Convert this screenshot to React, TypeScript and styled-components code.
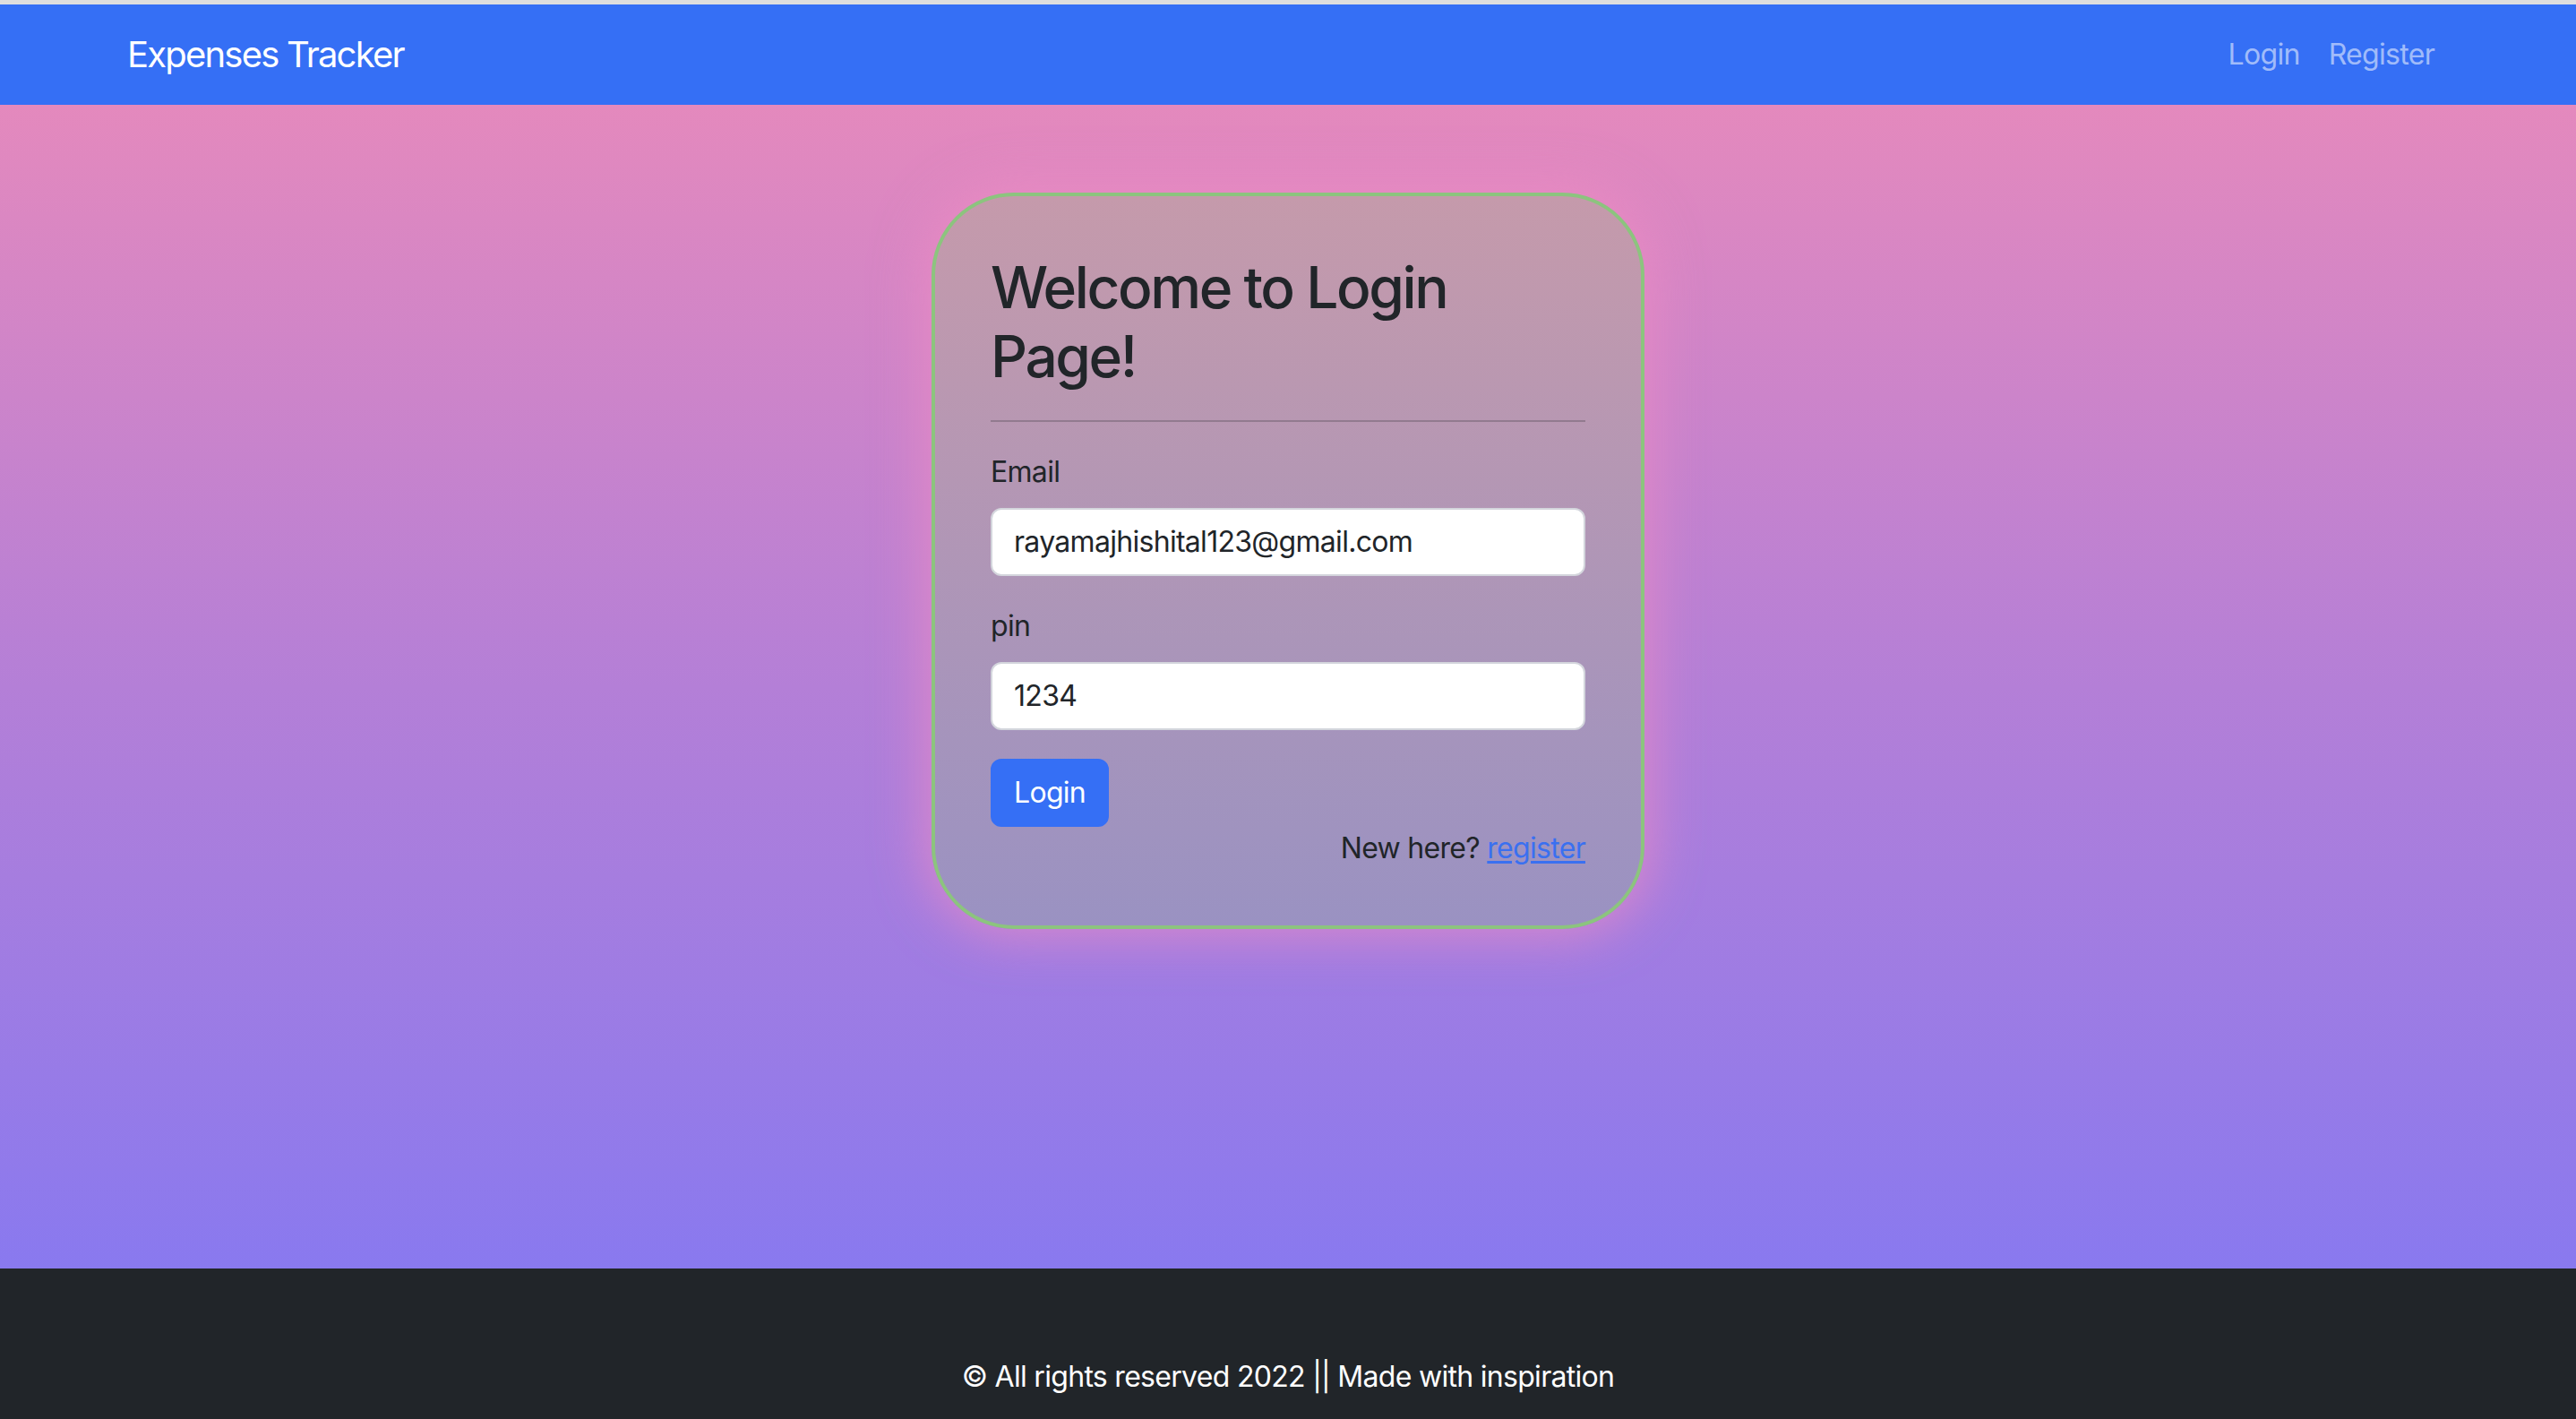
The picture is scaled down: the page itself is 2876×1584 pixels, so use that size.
import React from "react";
import styled, { createGlobalStyle } from "styled-components";

const GlobalStyle = createGlobalStyle`
  html, body {
    margin: 0;
    padding: 0;
  }
  body {
    font-family: Inter, "Noto Sans", "Liberation Sans", sans-serif;
    color: #212529;
    background: #212529;
  }
  * { box-sizing: border-box; }
`;

const Page = styled.div`
  min-height: 100vh;
  display: flex;
  flex-direction: column;
  border-top: 5px solid #dedede;
`;

const Navbar = styled.nav`
  height: 112px;
  background: #356ff5;
  flex-shrink: 0;
`;

const NavContainer = styled.div`
  max-width: 2640px;
  height: 100%;
  margin: 0 auto;
  padding: 0 24px;
  display: flex;
  align-items: center;
  justify-content: space-between;
`;

const Brand = styled.a`
  font-size: 40px;
  line-height: 60px;
  letter-spacing: -1.8px;
  color: #ffffff;
  text-decoration: none;
  font-weight: 400;
`;

const NavLinks = styled.div`
  display: flex;
  align-items: center;
`;

const NavLink = styled.a`
  font-size: 32px;
  line-height: 48px;
  letter-spacing: -0.7px;
  padding: 0 16px;
  color: rgba(255, 255, 255, 0.55);
  text-decoration: none;
`;

const Main = styled.main`
  flex: 1;
  display: flex;
  flex-direction: column;
  align-items: center;
  background: linear-gradient(180deg, #e489bd 0%, #b47fd7 50%, #8979ef 100%);
`;

const Card = styled.section`
  width: 796px;
  margin-top: 98px;
  padding: 64px 62px 62px;
  border: 4px solid #8cc47e;
  border-radius: 92px;
  background: linear-gradient(180deg, #c59aab 0%, #9a92c2 100%);
  box-shadow: 0 0 56px 8px rgba(240, 140, 195, 0.7);
`;

const Title = styled.h2`
  margin: 0;
  font-size: 64px;
  line-height: 1.2;
  font-weight: 500;
  color: #212529;
  letter-spacing: -2.4px;
`;

const Divider = styled.hr`
  margin: 32px 0;
  border: 0;
  border-top: 2px solid rgba(33, 37, 41, 0.25);
`;

const Field = styled.div`
  margin-bottom: 32px;
`;

const Label = styled.label`
  display: block;
  font-size: 32px;
  line-height: 48px;
  letter-spacing: -0.7px;
  margin-bottom: 16px;
  color: #212529;
`;

const Input = styled.input`
  display: block;
  width: 100%;
  height: 76px;
  padding: 12px 24px;
  font-family: inherit;
  font-size: 32px;
  line-height: 48px;
  letter-spacing: -0.7px;
  color: #212529;
  background: #ffffff;
  border: 2px solid #d3d5dc;
  border-radius: 12px;
  outline: none;
`;

const Button = styled.button`
  font-family: inherit;
  font-size: 32px;
  line-height: 48px;
  letter-spacing: -0.7px;
  padding: 12px 24px;
  color: #ffffff;
  background: #356ff5;
  border: 2px solid #356ff5;
  border-radius: 12px;
  cursor: pointer;
`;

const Note = styled.p`
  margin: 0;
  text-align: right;
  font-size: 32px;
  line-height: 48px;
  letter-spacing: -0.7px;
  color: #212529;
`;

const TextLink = styled.a`
  color: #3a70f0;
  text-decoration: underline;
  text-underline-offset: 3px;
`;

const Footer = styled.footer`
  flex-shrink: 0;
  height: 168px;
  padding-top: 97px;
  background: #212529;
  color: #ffffff;
  text-align: center;
  font-size: 32px;
  line-height: 48px;
  letter-spacing: -0.7px;
`;

export default function App() {
  return (
    <>
      <GlobalStyle />
      <Page>
        <Navbar>
          <NavContainer>
            <Brand href="#">Expenses Tracker</Brand>
            <NavLinks>
              <NavLink href="#">Login</NavLink>
              <NavLink href="#">Register</NavLink>
            </NavLinks>
          </NavContainer>
        </Navbar>
        <Main>
          <Card>
            <Title>Welcome to Login Page!</Title>
            <Divider />
            <form onSubmit={(e) => e.preventDefault()}>
              <Field>
                <Label htmlFor="email">Email</Label>
                <Input id="email" type="email" defaultValue="rayamajhishital123@gmail.com" />
              </Field>
              <Field>
                <Label htmlFor="pin">pin</Label>
                <Input id="pin" type="text" defaultValue="1234" />
              </Field>
              <Button type="submit">Login</Button>
            </form>
            <Note>
              New here? <TextLink href="#">register</TextLink>
            </Note>
          </Card>
        </Main>
        <Footer>© All rights reserved 2022 || Made with inspiration</Footer>
      </Page>
    </>
  );
}
